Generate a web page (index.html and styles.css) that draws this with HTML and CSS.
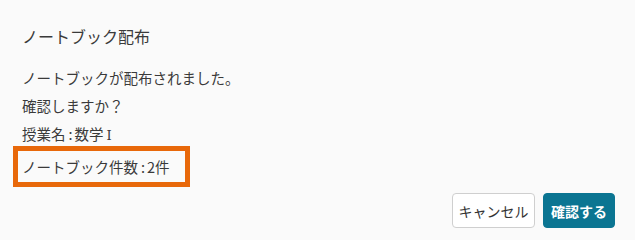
FILE: index.html
```html
<!DOCTYPE html>
<html lang="ja">
<head>
<meta charset="utf-8">
<link rel="stylesheet" href="styles.css">
</head>
<body>
<div class="dialog">
  <h1 class="title">ノートブック配布</h1>
  <div class="content">
    <p class="line">ノートブックが配布されました。</p>
    <p class="line">確認しますか？</p>
    <p class="line">授業名<span class="colon">:</span>数学<span class="roman">Ⅰ</span></p>
    <p class="line highlight">ノートブック件数<span class="colon">:</span>2件</p>
  </div>
  <div class="actions">
    <button class="btn btn-cancel">キャンセル</button>
    <button class="btn btn-primary">確認する</button>
  </div>
</div>
</body>
</html>
```
FILE: styles.css
```css
html, body {
  margin: 0;
  padding: 0;
  background: #fafafa;
}
body {
  width: 635px;
  height: 240px;
  overflow: hidden;
  font-family: "Noto Sans CJK JP", "Noto Sans", sans-serif;
  color: #3a3a3a;
}
.dialog {
  display: flex;
  flex-direction: column;
  padding: 24px 20px 0 22px;
}
.title {
  margin: 0;
  font-size: 16px;
  font-weight: normal;
  line-height: 24px;
}
.content {
  margin-top: 16px;
  display: flex;
  flex-direction: column;
}
.line {
  margin: 0;
  font-size: 14.5px;
  line-height: 28px;
  white-space: pre;
}
.colon {
  margin: 0 2px 0 3px;
}
.roman {
  font-family: "DejaVu Serif", "Liberation Serif", serif;
  font-size: 13px;
  margin-left: 3px;
}
.highlight {
  align-self: flex-start;
  box-sizing: border-box;
  width: 177px;
  height: 41px;
  margin-left: -9px;
  margin-top: -4px;
  padding: 0 0 0 4px;
  border: 5px solid #e8680a;
  line-height: 31px;
}
.actions {
  display: flex;
  justify-content: flex-end;
  gap: 8px;
  margin-top: 6px;
}
.btn {
  font-family: "Noto Sans CJK JP", "Noto Sans", sans-serif;
  font-size: 14px;
  height: 35px;
  padding: 0;
  border-radius: 4px;
  cursor: pointer;
}
.btn-cancel {
  width: 83px;
  background: #fff;
  border: 1px solid #cfcfcf;
  color: #333;
}
.btn-primary {
  width: 72px;
  background: #0b7592;
  border: 1px solid #0b7592;
  color: #fff;
  font-weight: bold;
}
```
